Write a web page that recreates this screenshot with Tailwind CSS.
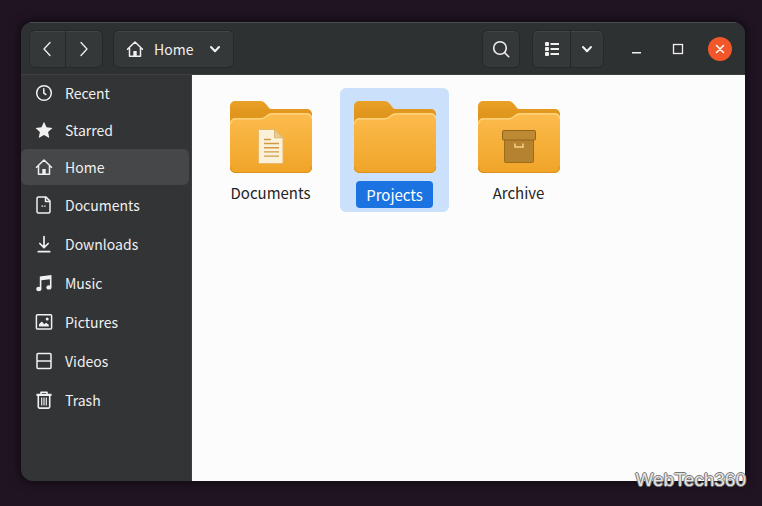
<!DOCTYPE html>
<html lang="en">
  <head>
    <meta charset="UTF-8" />
    <meta name="viewport" content="width=device-width, initial-scale=1.0" />
    <title>Home</title>
    <script src="https://cdn.jsdelivr.net/npm/@tailwindcss/browser@4"></script>
  </head>
  <body
    class="relative flex min-h-screen flex-col bg-[#201423] pt-[22px] pr-[17px] pb-[25px] pl-[21px] font-['Noto_Sans_CJK_SC','Noto_Sans',sans-serif] text-sm leading-5 text-[#f0f0f0]"
  >
    <!-- Shared shapes -->
    <svg class="absolute h-0 w-0" aria-hidden="true">
      <defs>
        <linearGradient id="folder-back" x1="0" y1="0" x2="0" y2="1">
          <stop offset="0" stop-color="#eaa127" />
          <stop offset="0.4" stop-color="#e0951c" />
        </linearGradient>
        <linearGradient id="folder-front" x1="0" y1="0" x2="0" y2="1">
          <stop offset="0" stop-color="#fcbc4d" />
          <stop offset="1" stop-color="#f0a428" />
        </linearGradient>
        <symbol id="folder" viewBox="0 0 82 72">
          <path
            d="M0 5a5 5 0 0 1 5-5h25c3 0 4 1 6 3l3 4c1 1 2 1 4 1h34a5 5 0 0 1 5 5v20H0z"
            fill="url(#folder-back)"
          />
          <path
            d="M0 22a5 5 0 0 1 5-5h25c3 0 5-1 7-3 2-2 4-2 7-2h33a5 5 0 0 1 5 5v50a5 5 0 0 1-5 5H5a5 5 0 0 1-5-5z"
            fill="url(#folder-front)"
          />
          <path
            d="M.7 23a5 5 0 0 1 4.300-5.200h25c3 0 5-1 7-3 2-2 4-2 7-2h33a5 5 0 0 1 4.500 4.700"
            fill="none"
            stroke="#ffd888"
            stroke-width="1.200"
          />
          <path
            d="M.5 66a5 5 0 0 0 4.500 5.500h72a5 5 0 0 0 4.500-5.500"
            fill="none"
            stroke="#dc901d"
          />
        </symbol>
        <symbol id="home" viewBox="0 0 18 18">
          <path
            d="M1.500 9.300 9 2l7.500 7.300M3.500 8v8.200h11V8"
            fill="none"
            stroke="currentColor"
            stroke-width="1.500"
            stroke-linecap="round"
            stroke-linejoin="round"
          />
          <path d="M7.300 11h3.400v5H7.300z" fill="currentColor" />
        </symbol>
        <symbol id="chevron" viewBox="0 0 12 12">
          <path
            d="m2 4 4 4.300L10 4"
            fill="none"
            stroke="currentColor"
            stroke-width="2"
            stroke-linecap="round"
            stroke-linejoin="round"
          />
        </symbol>
      </defs>
    </svg>

    <div
      class="flex flex-1 flex-col overflow-hidden rounded-xl rounded-br-none bg-[#323436] shadow-[0_0_10px_2px_rgba(0,0,0,0.5)]"
    >
      <!-- Header bar -->
      <header
        class="flex h-[53px] shrink-0 items-center border-t border-b border-t-[#4b4d4e] border-b-[#3d4041] bg-[#2e3132] px-2"
      >
        <div
          class="flex h-[38px] divide-x divide-[#242627] rounded-md border border-[#262829] bg-[#353839] shadow-[inset_0_1px_0_#434647]"
        >
          <button class="flex w-9 items-center justify-center" aria-label="Back">
            <svg class="h-4 w-4" viewBox="0 0 16 16" fill="none" stroke="currentColor" stroke-width="1.300" stroke-linecap="round">
              <path d="M10 1.500 4 8l6 6.500" />
            </svg>
          </button>
          <button class="flex w-9 items-center justify-center" aria-label="Forward">
            <svg class="h-4 w-4" viewBox="0 0 16 16" fill="none" stroke="currentColor" stroke-width="1.300" stroke-linecap="round">
              <path d="M5 1.500 11 8l-6 6.500" />
            </svg>
          </button>
        </div>

        <button
          class="ml-2.5 flex h-[38px] items-center rounded-md border border-[#262829] bg-[#353839] px-3 shadow-[inset_0_1px_0_#434647]"
        >
          <svg class="h-[18px] w-[18px]"><use href="#home" /></svg>
          <span class="ml-2.5">Home</span>
          <svg class="ml-4 h-3 w-3"><use href="#chevron" /></svg>
        </button>

        <button
          class="ml-auto flex h-[38px] w-[38px] items-center justify-center rounded-md border border-[#262829] bg-[#353839] shadow-[inset_0_1px_0_#434647]"
          aria-label="Search"
        >
          <svg class="h-[18px] w-[18px]" viewBox="0 0 18 18" fill="none" stroke="currentColor" stroke-width="1.600" stroke-linecap="round">
            <circle cx="8" cy="8" r="6.300" />
            <path d="m12.700 12.700 4 4" />
          </svg>
        </button>

        <div
          class="ml-3 flex h-[38px] divide-x divide-[#242627] rounded-md border border-[#262829] bg-[#353839] shadow-[inset_0_1px_0_#434647]"
        >
          <button class="flex w-[38px] items-center justify-center" aria-label="List view">
            <svg class="h-4 w-4" viewBox="0 0 16 16" fill="currentColor">
              <rect x="1" y="1" width="4" height="4" rx="1" />
              <rect x="1" y="6" width="4" height="4" rx="1" />
              <rect x="1" y="11" width="4" height="4" rx="1" />
              <path d="M6.500 2H15v2H6.500zM6.500 7H15v2H6.500zM6.500 12H15v2H6.500z" />
            </svg>
          </button>
          <button class="flex w-8 items-center justify-center" aria-label="View options">
            <svg class="h-3 w-3"><use href="#chevron" /></svg>
          </button>
        </div>

        <div class="ml-5 flex items-center gap-[18px] pr-[5px]">
          <button class="flex h-6 w-6 items-center justify-center" aria-label="Minimize">
            <svg class="h-3 w-3" viewBox="0 0 12 12"><path d="M2 9h9v1.500H2z" fill="currentColor" /></svg>
          </button>
          <button class="flex h-6 w-6 items-center justify-center" aria-label="Maximize">
            <svg class="h-3 w-3" viewBox="0 0 12 12">
              <rect x="1.500" y="1.500" width="9" height="9" fill="none" stroke="currentColor" stroke-width="1.300" />
            </svg>
          </button>
          <button
            class="flex h-6 w-6 items-center justify-center rounded-full bg-[#f1572a]"
            aria-label="Close"
          >
            <svg class="h-3 w-3" viewBox="0 0 12 12" fill="none" stroke="#fff" stroke-width="1.500" stroke-linecap="round">
              <path d="m2.500 2.500 7 7M9.500 2.500l-7 7" />
            </svg>
          </button>
        </div>
      </header>

      <div class="flex flex-1">
        <!-- Sidebar -->
        <nav class="w-[171px] shrink-0 border-r border-[#3d4041] pr-0.5">
          <div class="flex flex-col gap-px">
            <a href="#" class="flex h-9 items-center gap-3 px-3.5">
              <svg class="h-[18px] w-[18px]" viewBox="0 0 18 18" fill="none" stroke="currentColor" stroke-width="1.500" stroke-linecap="round">
                <circle cx="9" cy="9" r="7.300" />
                <path d="M8.800 4.800v4.400l2 1.300" />
              </svg>
              Recent
            </a>
            <a href="#" class="flex h-9 items-center gap-3 px-3.5">
              <svg class="h-[18px] w-[18px]" viewBox="0 0 18 18" fill="currentColor">
                <path d="m9 .8 2.500 5.500 6 .7-4.400 4.100 1.200 6L9 14.100l-5.300 3 1.200-6L.5 7l6-.7z" />
              </svg>
              Starred
            </a>
            <a href="#" class="flex h-9 items-center gap-3 rounded-md bg-[#454748] px-3.5">
              <svg class="h-[18px] w-[18px]"><use href="#home" /></svg>
              Home
            </a>
          </div>
          <div class="mt-0.5 flex flex-col gap-[3px]">
            <a href="#" class="flex h-9 items-center gap-3 px-3.5">
              <svg class="h-[18px] w-[18px]" viewBox="0 0 18 18" fill="none" stroke="currentColor" stroke-width="1.500" stroke-linejoin="round">
                <path d="M3.500.9h7.300l4.200 4.200v10.500a1.500 1.500 0 0 1-1.500 1.500h-10A1.500 1.500 0 0 1 2 15.600V2.400A1.500 1.500 0 0 1 3.500.9z" />
                <path d="M10.500 1v4.500H15" />
                <path d="M6.500 10.200h1.700m1 0h1.500" stroke-width="1.200" />
              </svg>
              Documents
            </a>
            <a href="#" class="flex h-9 items-center gap-3 px-3.5">
              <svg class="h-[18px] w-[18px]" viewBox="0 0 18 18" fill="none" stroke="currentColor" stroke-width="1.700" stroke-linecap="round" stroke-linejoin="round">
                <path d="M9 1.500v11M4.800 8.500 9 12.700l4.200-4.200M3.300 16.700h11.400" />
              </svg>
              Downloads
            </a>
            <a href="#" class="flex h-9 items-center gap-3 px-3.5">
              <svg class="h-[18px] w-[18px]" viewBox="0 0 18 18" fill="currentColor">
                <path d="M4.800 2.500 16.500 1v12h-1.600V5.200L6.400 6.300v9H4.800z" />
                <ellipse cx="3.800" cy="15" rx="2.600" ry="2.200" />
                <ellipse cx="13.900" cy="13.400" rx="2.600" ry="2.200" />
              </svg>
              Music
            </a>
            <a href="#" class="flex h-9 items-center gap-3 px-3.5">
              <svg class="h-[18px] w-[18px]" viewBox="0 0 18 18" fill="currentColor">
                <rect x="1.400" y="1.800" width="15.200" height="14.200" rx="1" fill="none" stroke="currentColor" stroke-width="1.500" />
                <path d="M4 13.500v-2.300l2.800-2.700 2.500 2.700 1.700-1.500 2.800 2v1.800z" />
                <circle cx="12.200" cy="6" r="1.500" />
              </svg>
              Pictures
            </a>
            <a href="#" class="flex h-9 items-center gap-3 px-3.5">
              <svg class="h-[18px] w-[18px]" viewBox="0 0 18 18" fill="none" stroke="currentColor" stroke-width="1.500">
                <rect x="2" y="1.500" width="14" height="15" rx="1" />
                <path d="M2 9h14" />
              </svg>
              Videos
            </a>
            <a href="#" class="flex h-9 items-center gap-3 px-3.5">
              <svg class="h-[18px] w-[18px]" viewBox="0 0 18 18" fill="none" stroke="currentColor" stroke-width="1.600" stroke-linejoin="round">
                <path d="M1.500 3.800h15" stroke-width="2.200" />
                <path d="M6 3V1.200h6V3M3.300 4.500v11.300a1.300 1.300 0 0 0 1.300 1.300h8.800a1.300 1.300 0 0 0 1.300-1.300V4.500" />
                <path d="M6.700 6.500v8M9 6.500v8M11.300 6.500v8" stroke-width="1.200" />
              </svg>
              Trash
            </a>
          </div>
        </nav>

        <!-- Files -->
        <main class="flex flex-1 flex-wrap content-start gap-[15px] bg-[#fcfcfc] px-6 pt-[13px] text-[15px] text-[#242424]">
          <a href="#" class="flex h-[124px] w-[109px] flex-col items-center rounded-md pt-[13px]">
            <span class="grid place-items-center">
              <svg class="col-start-1 row-start-1 h-[72px] w-[82px]"><use href="#folder" /></svg>
              <svg class="col-start-1 row-start-1 mt-[18px] h-[35px] w-[26px]" viewBox="0 0 26 35">
                <path d="M1.500.5H17l8 8v25a1 1 0 0 1-1 1H1.500a1 1 0 0 1-1-1v-32a1 1 0 0 1 1-1z" fill="#fbf1d9" stroke="#e6b868" />
                <path d="M16.500.8v8h8z" fill="#e9cc91" stroke="#d6a752" stroke-width=".7" />
                <path d="M6 10.500h7M6 14.500h15M6 18.700h15M6 22.900h15M6 27.100h15" stroke="#cf9a48" stroke-width="1.400" />
              </svg>
            </span>
            <span class="mt-1.5 flex h-7 items-center px-2.5">Documents</span>
          </a>
          <a href="#" class="flex h-[124px] w-[109px] flex-col items-center rounded-md bg-[#cbe1fb] pt-[13px]">
            <svg class="h-[72px] w-[82px]"><use href="#folder" /></svg>
            <span class="mt-2 flex h-[27px] items-center rounded bg-[#1a73e0] px-2.5 text-white">Projects</span>
          </a>
          <a href="#" class="flex h-[124px] w-[109px] flex-col items-center rounded-md pt-[13px]">
            <span class="grid place-items-center">
              <svg class="col-start-1 row-start-1 h-[72px] w-[82px]"><use href="#folder" /></svg>
              <svg class="col-start-1 row-start-1 mt-[18px] h-[33px] w-[34px]" viewBox="0 0 34 33">
                <path d="M2.500 9.500h29v22a1 1 0 0 1-1 1h-27a1 1 0 0 1-1-1z" fill="#b5832f" stroke="#a06c1a" />
                <rect x=".5" y=".5" width="33" height="9.500" rx="1" fill="#bc8a33" stroke="#94631a" />
                <path d="M13 14v3h8v-3" fill="none" stroke="#f3d18a" stroke-width="1.500" stroke-linecap="round" />
              </svg>
            </span>
            <span class="mt-1.5 flex h-7 items-center px-2.5">Archive</span>
          </a>
        </main>
      </div>
    </div>

    <!-- Watermark -->
    <div
      class="absolute right-4 bottom-3.5 font-['Liberation_Sans',sans-serif] text-[19px] leading-6 text-[#e4e4e4] [text-shadow:-1px_0_#777,1px_0_#777,0_-1px_#777,0_1px_#777]"
    >
      WebTech360
    </div>
  </body>
</html>
